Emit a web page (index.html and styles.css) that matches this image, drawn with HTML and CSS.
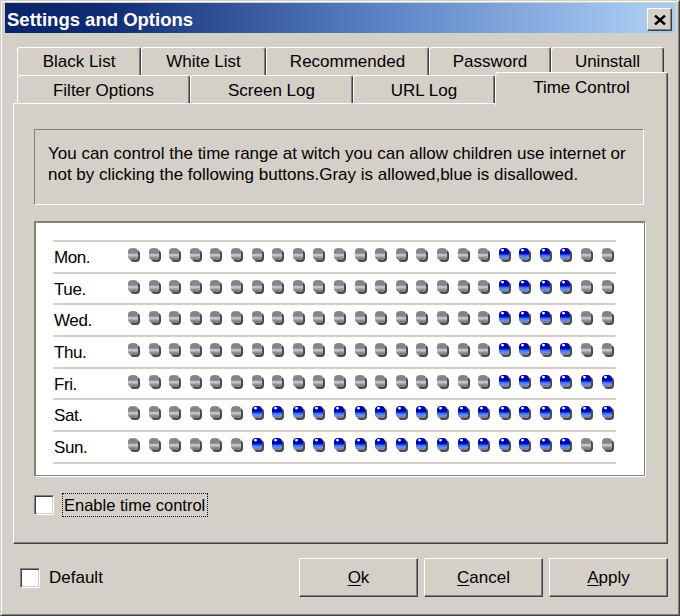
FILE: index.html
```html
<!DOCTYPE html>
<html>
<head>
<meta charset="utf-8">
<title>Settings and Options</title>
<link rel="stylesheet" href="styles.css">
</head>
<body>
<div class="window">
  <div class="frame">
    <div class="titlebar">
      <span class="title">Settings and Options</span>
      <button class="close" type="button"><svg width="12" height="10" viewBox="0 0 12 10"><path d="M1 0.5 L11 9.5 M11 0.5 L1 9.5" stroke="#000" stroke-width="2.4" fill="none"/></svg></button>
    </div>
    <div class="tabs">
      <div class="tab-row back">
        <div class="tab w-black">Black List</div>
        <div class="tab w-white">White List</div>
        <div class="tab w-rec">Recommended</div>
        <div class="tab w-pass">Password</div>
        <div class="tab w-uninst">Uninstall</div>
      </div>
      <div class="tab-row front">
        <div class="tab w-filter">Filter Options</div>
        <div class="tab w-screen">Screen Log</div>
        <div class="tab w-url">URL Log</div>
        <div class="tab w-time selected">Time Control</div>
      </div>
    </div>
    <div class="panel">
      <div class="info">You can control the time range at witch you can allow children use internet or<br>not by clicking the following buttons.Gray is allowed,blue is disallowed.</div>
      <div class="gridbox">
        <div class="rows">
          <div class="row"><span class="day">Mon.</span><span class="dots"><i class="dot"></i><i class="dot"></i><i class="dot"></i><i class="dot"></i><i class="dot"></i><i class="dot"></i><i class="dot"></i><i class="dot"></i><i class="dot"></i><i class="dot"></i><i class="dot"></i><i class="dot"></i><i class="dot"></i><i class="dot"></i><i class="dot"></i><i class="dot"></i><i class="dot"></i><i class="dot"></i><i class="dot on"></i><i class="dot on"></i><i class="dot on"></i><i class="dot on"></i><i class="dot"></i><i class="dot"></i></span></div>
          <div class="row"><span class="day">Tue.</span><span class="dots"><i class="dot"></i><i class="dot"></i><i class="dot"></i><i class="dot"></i><i class="dot"></i><i class="dot"></i><i class="dot"></i><i class="dot"></i><i class="dot"></i><i class="dot"></i><i class="dot"></i><i class="dot"></i><i class="dot"></i><i class="dot"></i><i class="dot"></i><i class="dot"></i><i class="dot"></i><i class="dot"></i><i class="dot on"></i><i class="dot on"></i><i class="dot on"></i><i class="dot on"></i><i class="dot"></i><i class="dot"></i></span></div>
          <div class="row"><span class="day">Wed.</span><span class="dots"><i class="dot"></i><i class="dot"></i><i class="dot"></i><i class="dot"></i><i class="dot"></i><i class="dot"></i><i class="dot"></i><i class="dot"></i><i class="dot"></i><i class="dot"></i><i class="dot"></i><i class="dot"></i><i class="dot"></i><i class="dot"></i><i class="dot"></i><i class="dot"></i><i class="dot"></i><i class="dot"></i><i class="dot on"></i><i class="dot on"></i><i class="dot on"></i><i class="dot on"></i><i class="dot"></i><i class="dot"></i></span></div>
          <div class="row"><span class="day">Thu.</span><span class="dots"><i class="dot"></i><i class="dot"></i><i class="dot"></i><i class="dot"></i><i class="dot"></i><i class="dot"></i><i class="dot"></i><i class="dot"></i><i class="dot"></i><i class="dot"></i><i class="dot"></i><i class="dot"></i><i class="dot"></i><i class="dot"></i><i class="dot"></i><i class="dot"></i><i class="dot"></i><i class="dot"></i><i class="dot on"></i><i class="dot on"></i><i class="dot on"></i><i class="dot on"></i><i class="dot"></i><i class="dot"></i></span></div>
          <div class="row"><span class="day">Fri.</span><span class="dots"><i class="dot"></i><i class="dot"></i><i class="dot"></i><i class="dot"></i><i class="dot"></i><i class="dot"></i><i class="dot"></i><i class="dot"></i><i class="dot"></i><i class="dot"></i><i class="dot"></i><i class="dot"></i><i class="dot"></i><i class="dot"></i><i class="dot"></i><i class="dot"></i><i class="dot"></i><i class="dot"></i><i class="dot on"></i><i class="dot on"></i><i class="dot on"></i><i class="dot on"></i><i class="dot on"></i><i class="dot on"></i></span></div>
          <div class="row"><span class="day">Sat.</span><span class="dots"><i class="dot"></i><i class="dot"></i><i class="dot"></i><i class="dot"></i><i class="dot"></i><i class="dot"></i><i class="dot on"></i><i class="dot on"></i><i class="dot on"></i><i class="dot on"></i><i class="dot on"></i><i class="dot on"></i><i class="dot on"></i><i class="dot on"></i><i class="dot on"></i><i class="dot on"></i><i class="dot on"></i><i class="dot on"></i><i class="dot on"></i><i class="dot on"></i><i class="dot on"></i><i class="dot on"></i><i class="dot on"></i><i class="dot on"></i></span></div>
          <div class="row"><span class="day">Sun.</span><span class="dots"><i class="dot"></i><i class="dot"></i><i class="dot"></i><i class="dot"></i><i class="dot"></i><i class="dot"></i><i class="dot on"></i><i class="dot on"></i><i class="dot on"></i><i class="dot on"></i><i class="dot on"></i><i class="dot on"></i><i class="dot on"></i><i class="dot on"></i><i class="dot on"></i><i class="dot on"></i><i class="dot on"></i><i class="dot on"></i><i class="dot on"></i><i class="dot on"></i><i class="dot on"></i><i class="dot on"></i><i class="dot"></i><i class="dot"></i></span></div>
        </div>
      </div>
      <div class="check-row enable">
        <span class="checkbox"></span>
        <span class="focus">Enable time control</span>
      </div>
    </div>
    <div class="footer">
      <div class="check-row default">
        <span class="checkbox"></span>
        <span class="default-text">Default</span>
      </div>
      <div class="buttons">
        <button class="btn" type="button"><u>O</u>k</button>
        <button class="btn" type="button"><u>C</u>ancel</button>
        <button class="btn" type="button"><u>A</u>pply</button>
      </div>
    </div>
  </div>
</div>
</body>
</html>
```
FILE: styles.css
```css
* { box-sizing: border-box; }

body {
  margin: 0;
  font-family: "Liberation Sans", Arial, sans-serif;
  font-size: 17px;
  color: #000;
  background: #d4d0c8;
}

.window {
  width: 680px;
  height: 616px;
  background: #d4d0c8;
  border: 1px solid;
  border-color: #d4d0c8 #404040 #404040 #d4d0c8;
}

.frame {
  height: 100%;
  border: 1px solid;
  border-color: #fff #808080 #808080 #fff;
  padding: 1px 3px 3px 3px;
}

.titlebar {
  height: 30px;
  display: flex;
  justify-content: space-between;
  align-items: flex-start;
  background: linear-gradient(to right, #0a246a 0%, #0f2c74 15%, #5a80c4 55%, #a6caf0 95%);
  padding: 0 3px 0 2px;
}

.title {
  color: #fff;
  font-weight: bold;
  font-size: 18.5px;
  line-height: 20px;
  padding-top: 7px;
}

.close {
  margin-top: 5px;
  width: 25px;
  height: 23px;
  padding: 0;
  display: flex;
  align-items: center;
  justify-content: center;
  background: #d4d0c8;
  border: 1px solid;
  border-color: #fff #404040 #404040 #fff;
  box-shadow: inset -1px -1px #808080;
}

.tabs {
  margin: 14px 0 0 12px;
}

.tab-row {
  display: flex;
  height: 28px;
}

.tab {
  flex: none;
  height: 28px;
  border-top: 1px solid #fff;
  border-left: 1px solid #fff;
  border-right: 1px solid #404040;
  box-shadow: inset -1px 0 #808080;
  border-radius: 3px 3px 0 0;
  background: #d4d0c8;
  text-align: center;
  line-height: 20px;
  padding-top: 4px;
  white-space: nowrap;
}

.front .tab { padding-top: 5px; }

.w-black { width: 124px; }
.w-white { width: 125px; }
.w-rec { width: 163px; }
.w-pass { width: 122px; }
.w-uninst { width: 113px; }
.w-filter { width: 173px; }
.w-screen { width: 163px; }
.w-url { width: 142px; }
.w-time { width: 173px; }

.tab.selected {
  height: 33px;
  margin-top: -3px;
  padding-top: 5px;
  position: relative;
  z-index: 1;
}

.panel {
  margin-left: 8px;
  width: 655px;
  height: 441px;
  border: 1px solid;
  border-color: #fff #404040 #404040 #fff;
  box-shadow: inset -1px -1px #808080;
  padding: 25px 0 0 20px;
}

.info {
  width: 610px;
  height: 76px;
  border: 1px solid;
  border-color: #808080 #fff #fff #808080;
  padding: 13px 0 0 13px;
  font-size: 17px;
  line-height: 21px;
  white-space: nowrap;
}

.gridbox {
  margin-top: 16px;
  width: 612px;
  height: 256px;
  background: #fff;
  border: 1px solid;
  border-color: #808080 #fff #fff #808080;
  box-shadow: inset 1px 1px #808080, inset -1px -1px #808080;
  padding: 18px 0 0 18px;
}

.rows {
  width: 563px;
  border-bottom: 2px solid #d4d0c8;
}

.row {
  height: 31.7px;
  border-top: 2px solid #d4d0c8;
  display: flex;
  align-items: flex-start;
}

.day {
  width: 75px;
  flex: none;
  padding: 6px 0 0 1px;
  line-height: 20px;
  font-size: 17px;
  letter-spacing: -0.4px;
}

.dots {
  display: flex;
  gap: 10.6px;
  padding-top: 6px;
}

.dot {
  display: block;
  width: 10px;
  height: 12px;
  border-radius: 4px;
  background: linear-gradient(180deg, #9a9a9a 0%, #808080 15%, #8a8a8a 45%, #c8ccd8 55%, #bcc0cc 65%, #8c8c8c 80%, #707070 100%);
  box-shadow: 2px 2px 0 #4a4a4a;
}

.dot.on {
  background:
    radial-gradient(circle at 35% 18%, #ffffff 0, #ffffff 1px, rgba(255,255,255,0) 1.6px),
    linear-gradient(180deg, #0000c0 0%, #0000a8 45%, #1840f0 55%, #4080ff 65%, #7090d0 80%, #6878a0 100%);
}

.check-row {
  display: flex;
  align-items: center;
}

.enable {
  margin-top: 16px;
  height: 24px;
}

.checkbox {
  flex: none;
  width: 20px;
  height: 20px;
  background: #fff;
  border: 1px solid;
  border-color: #808080 #fff #fff #808080;
  box-shadow: inset 1px 1px #404040, inset -1px -1px #d4d0c8;
}

.focus {
  margin-left: 8px;
  border: 1px dotted #000;
  line-height: 22px;
  padding: 0 2px 0 1px;
  font-size: 16.5px;
}

.footer {
  display: flex;
  justify-content: space-between;
  align-items: center;
  margin-top: 14px;
  height: 39px;
  padding: 0 7px 0 15px;
}

.default-text {
  margin-left: 9px;
}

.buttons {
  display: flex;
  gap: 6px;
}

.btn {
  width: 119px;
  height: 39px;
  padding: 0;
  font-family: "Liberation Sans", Arial, sans-serif;
  font-size: 17px;
  line-height: 20px;
  color: #000;
  background: #d4d0c8;
  border: 1px solid;
  border-color: #fff #404040 #404040 #fff;
  box-shadow: inset -1px -1px #808080;
}

.btn u {
  text-underline-offset: 2px;
}
```
